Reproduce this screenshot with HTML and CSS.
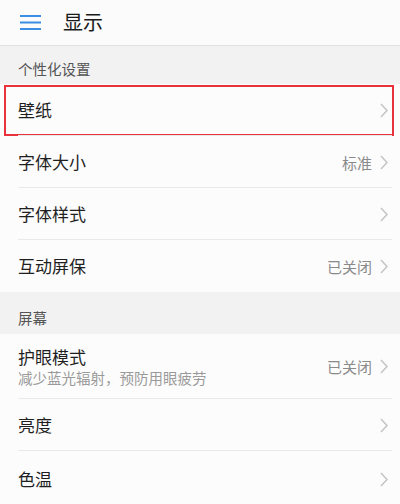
FILE: index.html
```html
<!DOCTYPE html>
<html lang="zh">
<head>
<meta charset="utf-8">
<link rel="stylesheet" href="styles.css">
</head>
<body>
<div class="page">
  <header class="topbar">
    <svg class="menu" width="22" height="18" viewBox="0 0 22 18">
      <rect x="0" y="2" width="21" height="2" fill="#3a8ee6"/>
      <rect x="0" y="8.5" width="21" height="2" fill="#3a8ee6"/>
      <rect x="0" y="15" width="21" height="2" fill="#3a8ee6"/>
    </svg>
    <div class="title">显示</div>
  </header>

  <div class="section s1">个性化设置</div>
  <div class="row r1 highlighted">
    <span class="label">壁纸</span>
    <span class="right"><svg class="chev" width="8" height="15" viewBox="0 0 8 15"><path d="M1 1 L7 7.5 L1 14" fill="none" stroke="#c4c4c4" stroke-width="1.5"/></svg></span>
  </div>
  <div class="row">
    <span class="label">字体大小</span>
    <span class="right"><span class="value">标准</span><svg class="chev" width="8" height="15" viewBox="0 0 8 15"><path d="M1 1 L7 7.5 L1 14" fill="none" stroke="#c4c4c4" stroke-width="1.5"/></svg></span>
  </div>
  <div class="row">
    <span class="label">字体样式</span>
    <span class="right"><svg class="chev" width="8" height="15" viewBox="0 0 8 15"><path d="M1 1 L7 7.5 L1 14" fill="none" stroke="#c4c4c4" stroke-width="1.5"/></svg></span>
  </div>
  <div class="row last">
    <span class="label">互动屏保</span>
    <span class="right"><span class="value">已关闭</span><svg class="chev" width="8" height="15" viewBox="0 0 8 15"><path d="M1 1 L7 7.5 L1 14" fill="none" stroke="#c4c4c4" stroke-width="1.5"/></svg></span>
  </div>

  <div class="section s2">屏幕</div>
  <div class="row tall">
    <span class="texts">
      <span class="label">护眼模式</span>
      <span class="sub">减少蓝光辐射，预防用眼疲劳</span>
    </span>
    <span class="right"><span class="value">已关闭</span><svg class="chev" width="8" height="15" viewBox="0 0 8 15"><path d="M1 1 L7 7.5 L1 14" fill="none" stroke="#c4c4c4" stroke-width="1.5"/></svg></span>
  </div>
  <div class="row">
    <span class="label">亮度</span>
    <span class="right"><svg class="chev" width="8" height="15" viewBox="0 0 8 15"><path d="M1 1 L7 7.5 L1 14" fill="none" stroke="#c4c4c4" stroke-width="1.5"/></svg></span>
  </div>
  <div class="row last r-end">
    <span class="label">色温</span>
    <span class="right"><svg class="chev" width="8" height="15" viewBox="0 0 8 15"><path d="M1 1 L7 7.5 L1 14" fill="none" stroke="#c4c4c4" stroke-width="1.5"/></svg></span>
  </div>
</div>
</body>
</html>
```

FILE: styles.css
```css
html, body {
  margin: 0;
  padding: 0;
  background: #f2f2f2;
}
body {
  width: 400px;
  height: 504px;
  overflow: hidden;
  font-family: "Noto Sans CJK SC", "Noto Sans", sans-serif;
  color: #1f1f1f;
}
.page {
  display: flex;
  flex-direction: column;
}
.topbar {
  height: 46px;
  background: #fbfbfb;
  border-bottom: 1px solid #e2e2e2;
  display: flex;
  align-items: center;
  box-sizing: border-box;
  padding-left: 20px;
}
.menu {
  display: block;
  margin-top: -2px;
}
.title {
  margin-left: 21px;
  font-size: 20px;
  line-height: 24px;
  color: #1a1a1a;
  margin-top: -2px;
}
.section {
  background: #f2f2f2;
  font-size: 14.5px;
  color: #555;
  padding-left: 18px;
  box-sizing: border-box;
  display: flex;
  align-items: center;
}
.s1 {
  height: 38px;
  padding-top: 6px;
}
.s2 {
  height: 42px;
  padding-top: 8px;
}
.row {
  position: relative;
  height: 52px;
  background: #fcfcfc;
  display: flex;
  align-items: center;
  justify-content: space-between;
  padding: 0 12px 0 18px;
  box-sizing: border-box;
}
.row::after {
  content: "";
  position: absolute;
  left: 18px;
  right: 8px;
  bottom: 0;
  height: 1px;
  background: #e9e9e9;
}
.row.last::after {
  display: none;
}
.row.r-end {
  height: 54px;
  padding-top: 2px;
}
.row.tall {
  height: 65px;
}
.r1 {
  height: 52px;
}
.highlighted::before {
  content: "";
  position: absolute;
  left: 4px;
  right: 6px;
  top: 1px;
  bottom: 0;
  border: 2px solid #e8323c;
}
.label {
  font-size: 17px;
  line-height: 22px;
  color: #1f1f1f;
}
.texts {
  display: flex;
  flex-direction: column;
  gap: 0px;
}
.sub {
  font-size: 14.5px;
  line-height: 20px;
  color: #9a9a9a;
  margin-top: 0px;
}
.right {
  display: flex;
  align-items: center;
  gap: 8px;
}
.value {
  font-size: 15px;
  color: #8a8a8a;
}
.chev {
  display: block;
}
```
